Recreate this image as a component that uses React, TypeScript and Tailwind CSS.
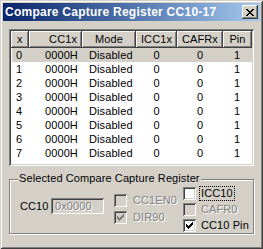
const rows = [0, 1, 2, 3, 4, 5, 6, 7];

const raised =
  'shadow-[inset_-1px_-1px_0_#404040,inset_1px_1px_0_#ffffff,inset_-2px_-2px_0_#808080]';
const sunken =
  'shadow-[inset_1px_1px_0_#808080,inset_-1px_-1px_0_#ffffff,inset_2px_2px_0_#404040,inset_-2px_-2px_0_#d4d0c8]';
const disabledText = 'text-[#808080] [text-shadow:1px_1px_0_#ffffff]';

function CloseGlyph() {
  const px = [
    [0, 0], [1, 0], [6, 0], [7, 0],
    [1, 1], [2, 1], [5, 1], [6, 1],
    [2, 2], [3, 2], [4, 2], [5, 2],
    [3, 3], [4, 3],
    [2, 4], [3, 4], [4, 4], [5, 4],
    [1, 5], [2, 5], [5, 5], [6, 5],
    [0, 6], [1, 6], [6, 6], [7, 6],
  ];
  return (
    <svg width="8" height="7" viewBox="0 0 8 7" shapeRendering="crispEdges">
      {px.map(([x, y]) => (
        <rect key={`${x}-${y}`} x={x} y={y} width="1" height="1" fill="#000" />
      ))}
    </svg>
  );
}

function CheckGlyph({ color }: { color: string }) {
  const px = [
    [6, 0],
    [5, 1], [6, 1],
    [0, 2], [4, 2], [5, 2], [6, 2],
    [0, 3], [1, 3], [3, 3], [4, 3], [5, 3],
    [0, 4], [1, 4], [2, 4], [3, 4], [4, 4],
    [1, 5], [2, 5], [3, 5],
    [2, 6],
  ];
  return (
    <svg width="7" height="7" viewBox="0 0 7 7" shapeRendering="crispEdges">
      {px.map(([x, y]) => (
        <rect key={`${x}-${y}`} x={x} y={y} width="1" height="1" fill={color} />
      ))}
    </svg>
  );
}

type CheckProps = {
  label: string;
  checked?: boolean;
  disabled?: boolean;
  focused?: boolean;
  gap: string;
};

function Check({ label, checked, disabled, focused, gap }: CheckProps) {
  return (
    <div className={`flex items-center ${gap}`}>
      <div
        className={`flex h-[13px] w-[13px] shrink-0 items-center justify-center ${sunken} ${
          disabled ? 'bg-[#d4d0c8]' : 'bg-white'
        }`}
      >
        {checked && <CheckGlyph color={disabled ? '#808080' : '#000000'} />}
      </div>
      <span
        className={`px-[1px] leading-[13px] ${disabled ? disabledText : ''} ${
          focused ? 'outline-1 outline-dotted outline-black' : ''
        }`}
      >
        {label}
      </span>
    </div>
  );
}

export default function App() {
  return (
    <div className="h-[249px] w-[263px] bg-[#d4d0c8] p-[3px] font-['Liberation_Sans',Arial,sans-serif] text-[11px] tracking-[0.1px] text-black shadow-[inset_1px_1px_0_#d4d0c8,inset_-1px_-1px_0_#404040,inset_2px_2px_0_#ffffff,inset_-2px_-2px_0_#808080]">
      <div className="flex h-[18px] items-center justify-between bg-linear-to-r from-[#0a246a] to-[#a6caf0] pl-[2px] pr-[2px]">
        <span className="text-[12px] font-bold leading-[18px] tracking-[0.25px] text-white">
          Compare Capture Register CC10-17
        </span>
        <div className={`flex h-[14px] w-[16px] items-center justify-center bg-[#d4d0c8] ${raised}`}>
          <CloseGlyph />
        </div>
      </div>

      <div className={`mx-[6px] mt-[8px] h-[137px] w-[245px] bg-white p-[2px] ${sunken}`}>
        <div className="flex h-[17px] leading-[17px]">
          <div className={`w-[18px] bg-[#d4d0c8] pl-[6px] ${raised}`}>x</div>
          <div className={`w-[53px] bg-[#d4d0c8] pr-[5px] text-right ${raised}`}>CC1x</div>
          <div className={`w-[54px] bg-[#d4d0c8] text-center ${raised}`}>Mode</div>
          <div className={`w-[41px] bg-[#d4d0c8] text-center ${raised}`}>ICC1x</div>
          <div className={`w-[46px] bg-[#d4d0c8] text-center ${raised}`}>CAFRx</div>
          <div className={`w-[29px] bg-[#d4d0c8] text-center ${raised}`}>Pin</div>
        </div>
        {rows.map((r) => (
          <div
            key={r}
            className={`ml-[1px] flex h-[14px] leading-[14px] ${r === 0 ? 'bg-[#d4d0c8]' : ''}`}
          >
            <div className="w-[17px] pl-[4px]">{r}</div>
            <div className="w-[53px] pl-[16px]">0000H</div>
            <div className="w-[54px] pl-[7px]">Disabled</div>
            <div className="w-[41px] text-center">0</div>
            <div className="w-[46px] text-center">0</div>
            <div className="w-[28px] text-center">1</div>
          </div>
        ))}
      </div>

      <div className="relative mx-[6px] mt-[13px] h-[55px] w-[245px] border border-[#808080] shadow-[1px_1px_0_#ffffff,inset_1px_1px_0_#ffffff]">
        <span className="absolute left-[8px] top-[-8px] bg-[#d4d0c8] px-[1px] leading-[13px]">
          Selected Compare Capture Register
        </span>
        <div className="flex items-start">
          <div className="mt-[18px] flex items-center pl-[10px]">
            <span className="w-[31px] leading-[13px]">CC10</span>
            <div
              className={`h-[16px] w-[53px] bg-[#d4d0c8] pl-[4px] leading-[16px] ${sunken} ${disabledText}`}
            >
              0x0000
            </div>
          </div>
          <div className="ml-[10px] mt-[14px] flex w-[69px] flex-col gap-[4px]">
            <Check label="CC1EN0" disabled gap="gap-[5px]" />
            <Check label="DIR90" checked disabled gap="gap-[5px]" />
          </div>
          <div className="mt-[7px] flex flex-col gap-[3px]">
            <Check label="ICC10" focused gap="gap-[4px]" />
            <Check label="CAFR0" disabled gap="gap-[4px]" />
            <Check label="CC10 Pin" checked gap="gap-[4px]" />
          </div>
        </div>
      </div>
    </div>
  );
}
